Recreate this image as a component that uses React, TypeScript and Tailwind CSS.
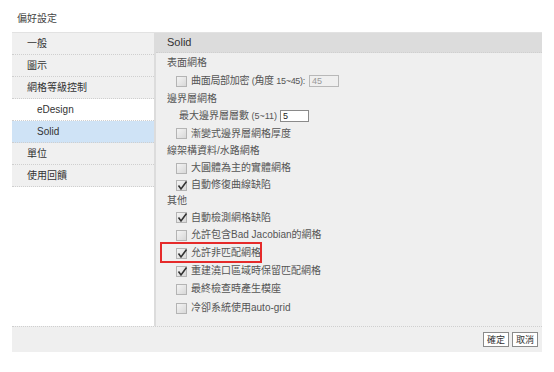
import React from "react";

const font = { fontFamily: '"Liberation Sans", "Noto Sans CJK TC", sans-serif' };

const Check = ({ checked }: { checked?: boolean }) => (
  <span className="relative inline-block w-[11px] h-[11px] border border-[#b4b4b4] bg-gradient-to-br from-[#f4f4f4] to-[#d8d8d8] mr-[4px] shrink-0">
    {checked && (
      <svg
        viewBox="0 0 11 11"
        className="absolute left-[0px] top-[-1px] w-[11px] h-[11px]"
      >
        <path d="M1.5 5.5 L4 9 L9.5 1.5" fill="none" stroke="#333" strokeWidth="1.6" />
      </svg>
    )}
  </span>
);

const SideItem = ({
  label,
  indent,
  tone,
}: {
  label: string;
  indent?: boolean;
  tone: "grey" | "white" | "blue";
}) => {
  const bg =
    tone === "blue" ? "bg-[#cfe3f6]" : tone === "white" ? "bg-white" : "bg-[#f0f0f0]";
  return (
    <div
      className={`h-[22px] flex items-center border-b border-dotted border-[#cfcfcf] text-[10px] text-[#333] ${bg} ${
        indent ? "pl-[25px]" : "pl-[15px]"
      }`}
    >
      {label}
    </div>
  );
};

export default function App() {
  return (
    <div className="w-[554px] h-[372px] bg-white px-[12px]" style={font}>
      {/* Title */}
      <div className="h-[32px] pt-[13px] pl-[5px] text-[10px] leading-[12px] text-[#444]">
        偏好設定
      </div>

      <div className="flex h-[294px] border-t border-[#e2e2e2]">
        {/* Sidebar */}
        <div className="w-[144px] border-r-2 border-[#dcdcdc] bg-white">
          <SideItem label="一般" tone="grey" />
          <SideItem label="圖示" tone="grey" />
          <SideItem label="網格等級控制" tone="grey" />
          <SideItem label="eDesign" tone="white" indent />
          <SideItem label="Solid" tone="blue" indent />
          <SideItem label="單位" tone="grey" />
          <SideItem label="使用回饋" tone="grey" />
        </div>

        {/* Right panel */}
        <div className="flex-1 flex flex-col bg-[#efefef]">
          <div className="h-[20px] bg-[#dcdcdc] border-b border-dotted border-[#cfcfcf] flex items-center pl-[11px] text-[11px] text-[#333]">
            Solid
          </div>
          <div className="flex-1 pt-[1px] text-[10px] text-[#555] leading-[12px] whitespace-nowrap">
            <div className="h-[18px] flex items-center pl-[11px]">表面網格</div>
            <div className="h-[18px] flex items-center pl-[20px]">
              <Check />
              <span className="w-[118px] shrink-0 tracking-[-0.3px]">
                曲面局部加密 <span className="text-[9px]">(</span>角度{" "}
                <span className="text-[9px]">15~45):</span>
              </span>
              <span className="w-[30px] h-[12px] border border-[#b8b8b8] bg-[#efefef] text-[#999] text-[9px] leading-[10px] pl-[2px]">
                45
              </span>
            </div>
            <div className="h-[17px] flex items-center pl-[11px]">邊界層網格</div>
            <div className="h-[18px] flex items-center pl-[23px]">
              <span className="w-[101px] shrink-0">
                最大邊界層層數<span className="text-[9px]"> (5~11) :</span>
              </span>
              <span className="w-[29px] h-[12px] border border-[#8a8a8a] bg-white text-[#222] text-[9px] leading-[10px] pl-[2px]">
                5
              </span>
            </div>
            <div className="h-[17px] flex items-center pl-[20px]">
              <Check />
              漸變式邊界層網格厚度
            </div>
            <div className="h-[17px] flex items-center pl-[11px]">線架構資料/水路網格</div>
            <div className="h-[18px] flex items-center pl-[20px]">
              <Check />
              大圓體為主的實體網格
            </div>
            <div className="h-[16px] flex items-center pl-[20px]">
              <Check checked />
              自動修復曲線缺陷
            </div>
            <div className="h-[16px] flex items-center pl-[11px]">其他</div>
            <div className="h-[17px] flex items-center pl-[20px]">
              <Check checked />
              自動檢測網格缺陷
            </div>
            <div className="h-[18px] flex items-center pl-[20px]">
              <Check />
              允許包含Bad Jacobian的網格
            </div>
            <div className="relative h-[18px] flex items-center pl-[20px]">
              <Check checked />
              允許非匹配網格
              <div className="absolute left-[4px] top-[-2px] w-[102px] h-[21px] border-2 border-[#e52a2a]" />
            </div>
            <div className="h-[18px] flex items-center pl-[20px]">
              <Check checked />
              重建澆口區域時保留匹配網格
            </div>
            <div className="h-[18px] flex items-center pl-[20px]">
              <Check />
              最終檢查時產生模座
            </div>
            <div className="h-[20px] flex items-center pl-[20px]">
              <Check />
              冷卻系統使用auto-grid
            </div>
          </div>
        </div>
      </div>

      {/* Bottom bar */}
      <div className="h-[26px] bg-[#efefef] border-t border-dotted border-[#cfcfcf] flex items-center justify-end gap-[3px] pr-[4px]">
        <button className="h-[15px] w-[26px] border border-[#8a8a8a] bg-white text-[9px] leading-[12px] text-[#333]">
          確定
        </button>
        <button className="h-[15px] w-[26px] border border-[#8a8a8a] bg-white text-[9px] leading-[12px] text-[#333]">
          取消
        </button>
      </div>
    </div>
  );
}
